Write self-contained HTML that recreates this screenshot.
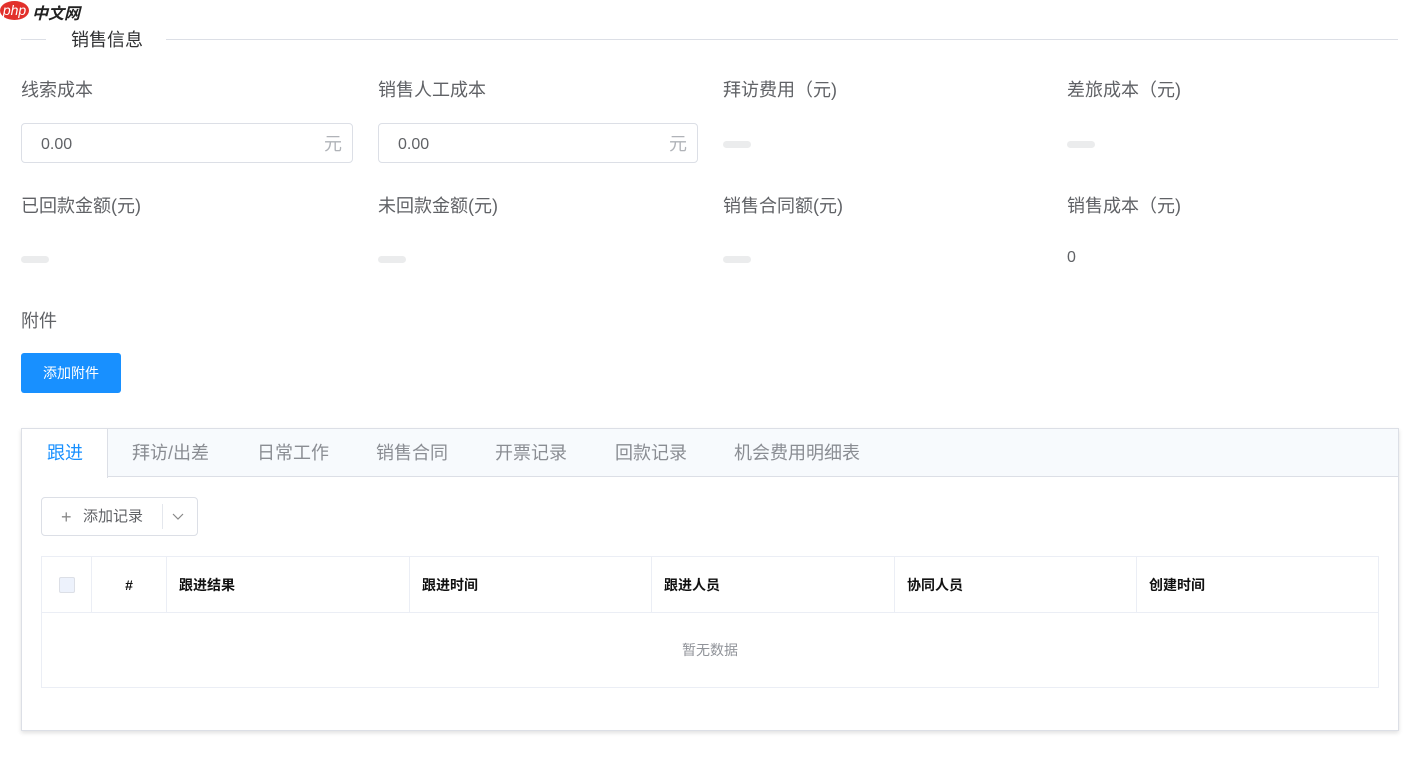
<!DOCTYPE html>
<html><head><meta charset="utf-8"><style>
*{box-sizing:border-box;margin:0;padding:0}
body{width:1415px;height:763px;background:#fff;font-family:"Liberation Sans","Noto Sans CJK SC",sans-serif;position:relative;overflow:hidden;color:#606266}
.a{position:absolute}
.lbl{font-size:18px;color:#606266}
.inp{border:1px solid #dcdfe6;border-radius:4px;height:40px;font-size:16px;color:#606266;padding:0 19px;line-height:41px}
.inp span{position:absolute;right:10px;color:#b0b3b8;font-size:18px}
.dash{width:28px;height:7px;border-radius:4px;background:#ebeced}
.th{position:absolute;top:0;height:56px;line-height:57px;font-size:14px;font-weight:bold;color:#111;padding-left:12px;border-right:1px solid #ebeef5}
.tab{position:absolute;top:0;height:48px;line-height:49px;font-size:18px;color:#8a8d93}
</style></head><body>
<div class="a" style="left:0;top:1px;width:29px;height:19px;border-radius:50%;background:#e2302b;color:#fff;font-style:italic;font-size:14px;line-height:18px;text-align:center">php</div>
<div class="a" style="left:32px;top:0;font-size:16px;font-style:italic;font-weight:bold;color:#222">中文网</div>
<div class="a" style="left:21px;top:39px;width:25px;height:1px;background:#dcdfe6"></div>
<div class="a" style="left:166px;top:39px;width:1232px;height:1px;background:#dcdfe6"></div>
<div class="a" style="left:71px;top:26px;font-size:18px;color:#303133">销售信息</div>

<div class="a lbl" style="left:21px;top:76px">线索成本</div>
<div class="a lbl" style="left:378px;top:76px">销售人工成本</div>
<div class="a lbl" style="left:723px;top:76px">拜访费用（元)</div>
<div class="a lbl" style="left:1067px;top:76px">差旅成本（元)</div>
<div class="a inp" style="left:21px;top:123px;width:332px">0.00<span>元</span></div>
<div class="a inp" style="left:378px;top:123px;width:320px">0.00<span>元</span></div>
<div class="a dash" style="left:723px;top:141px"></div>
<div class="a dash" style="left:1067px;top:141px"></div>

<div class="a lbl" style="left:21px;top:192px">已回款金额(元)</div>
<div class="a lbl" style="left:378px;top:192px">未回款金额(元)</div>
<div class="a lbl" style="left:723px;top:192px">销售合同额(元)</div>
<div class="a lbl" style="left:1067px;top:192px">销售成本（元)</div>
<div class="a dash" style="left:21px;top:256px"></div>
<div class="a dash" style="left:378px;top:256px"></div>
<div class="a dash" style="left:723px;top:256px"></div>
<div class="a" style="left:1067px;top:249px;font-size:16px;color:#606266">0</div>

<div class="a lbl" style="left:21px;top:307px">附件</div>
<div class="a" style="left:21px;top:353px;width:100px;height:40px;background:#1890ff;border-radius:3px;color:#fff;font-size:14px;line-height:41px;text-align:center">添加附件</div>

<div class="a" style="left:21px;top:428px;width:1378px;height:303px;border:1px solid #dcdfe6;box-shadow:0 2px 4px rgba(0,0,0,.12);background:#fff">
 <div class="a" style="left:0;top:0;width:1376px;height:48px;background:#f7fafd;border-bottom:1px solid #dcdfe6"></div>
 <div class="a" style="left:0;top:0;width:86px;height:49px;background:#fff;border-right:1px solid #dcdfe6"></div>
 <div class="tab" style="left:25px;color:#1890ff">跟进</div>
 <div class="tab" style="left:110px">拜访/出差</div>
 <div class="tab" style="left:235px">日常工作</div>
 <div class="tab" style="left:354px">销售合同</div>
 <div class="tab" style="left:473px">开票记录</div>
 <div class="tab" style="left:593px">回款记录</div>
 <div class="tab" style="left:712px">机会费用明细表</div>
 <div class="a" style="left:19px;top:68px;width:157px;height:39px;border:1px solid #dcdfe6;border-radius:4px;font-size:15px;color:#606266;line-height:38px">
  <span class="a" style="left:19px;font-size:18px;color:#888">+</span><span class="a" style="left:41px">添加记录</span>
  <div class="a" style="left:120px;top:6px;width:1px;height:25px;background:#e4e7ed"></div>
  <svg class="a" style="left:130px;top:15px" width="12" height="8"><path d="M1 1l5 5 5-5" fill="none" stroke="#888" stroke-width="1.2"/></svg>
 </div>
 <div class="a" style="left:19px;top:127px;width:1338px;height:132px;border:1px solid #ebeef5">
  <div class="a" style="left:0;top:0;width:1336px;height:56px;border-bottom:1px solid #ebeef5">
   <div class="th" style="left:0;width:50px"><div class="a" style="left:17px;top:20px;width:16px;height:16px;border:1px solid #dcdfe6;border-radius:2px;background:#edf2fc"></div></div>
   <div class="th" style="left:50px;width:75px;text-align:center;padding:0">#</div>
   <div class="th" style="left:125px;width:243px">跟进结果</div>
   <div class="th" style="left:368px;width:242px">跟进时间</div>
   <div class="th" style="left:610px;width:243px">跟进人员</div>
   <div class="th" style="left:853px;width:242px">协同人员</div>
   <div class="th" style="left:1095px;width:241px;border:0">创建时间</div>
  </div>
  <div class="a" style="left:0;top:56px;width:1336px;height:74px;line-height:74px;text-align:center;font-size:14px;color:#909399">暂无数据</div>
 </div>
</div>
</body></html>
